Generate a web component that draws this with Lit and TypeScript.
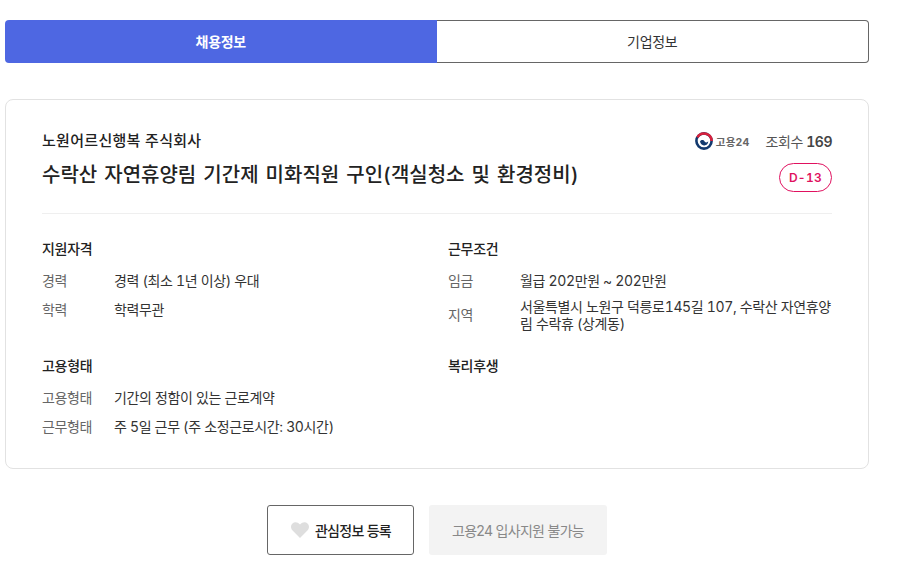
import { LitElement, html, css } from "lit";
import { customElement } from "lit/decorators.js";

@customElement("app-root")
export class AppRoot extends LitElement {
  static styles = css`
    :host {
      display: block;
      background: #fff;
      min-height: 586px;
      font-family: "Inter", "Noto Sans CJK KR", "Noto Sans", sans-serif;
      font-variant-numeric: tabular-nums;
      color: #222;
    }
    .page { width: 864px; padding: 20px 0 0 5px; }
    .tabs { display: flex; height: 43px; }
    .tab {
      flex: 1 1 0;
      display: flex; align-items: center; justify-content: center;
      font-size: 14px; letter-spacing: -0.3px; box-sizing: border-box; padding-bottom: 2px;
    }
    .tab.on { background: #4e67e2; color: #fff; font-weight: 700; border-radius: 4px 0 0 4px; }
    .tab.off { background: #fff; color: #333; border: 1px solid #666; border-left: 0; border-radius: 0 4px 4px 0; }
    .card {
      margin-top: 36px; height: 370px; box-sizing: border-box;
      border: 1px solid #e2e2e2; border-radius: 8px;
      padding: 30px 36px 0;
    }
    .head { display: flex; justify-content: space-between; height: 83px; border-bottom: 1px solid #efefef; }
    .company { font-size: 15px; font-weight: 500; line-height: 22px; letter-spacing: 0.3px; }
    .title { font-size: 20px; font-weight: 500; line-height: 30px; margin-top: 8px; word-spacing: 1.7px; }
    .side { display: flex; flex-direction: column; align-items: flex-end; }
    .meta { display: flex; align-items: center; height: 22px; }
    .logo { display: flex; align-items: center; gap: 3px; font-size: 10.5px; font-weight: 700; color: #666; margin-right: 16px; letter-spacing: 0.2px; }
    .views { font-size: 14px; color: #555; letter-spacing: -0.45px; }
    .views b { font-weight: 600; color: #444; }
    .dday {
      margin-top: 11px; width: 53px; height: 29px; box-sizing: border-box;
      border: 1px solid #e0115f; border-radius: 15px; color: #e0115f;
      font-size: 12px; font-weight: 600; letter-spacing: 0.3px;
      display: flex; align-items: center; justify-content: center;
    }
    .grid { display: grid; grid-template-columns: 406px 384px; grid-template-rows: 117px auto; margin-top: 25px; }
    h3 { margin: 0 0 7px; font-size: 14px; font-weight: 500; line-height: 20px; letter-spacing: -0.3px; color: #222; }
    .row { display: grid; grid-template-columns: 72px 1fr; align-items: center; font-size: 14px; line-height: 18px; min-height: 29px; color: #333; letter-spacing: -0.35px; }
    .row span:first-child { color: #666; }
    .row.multi { padding: 2.5px 0; }
    .row.multi span:last-child { line-height: 17px; }
    .actions { display: flex; justify-content: center; gap: 15px; margin-top: 36px; }
    .btn {
      height: 50px; box-sizing: border-box; border-radius: 3px;
      display: flex; align-items: center; justify-content: center;
      font-size: 14px; font-family: inherit; letter-spacing: -0.7px;
    }
    .fav { width: 147px; background: #fff; border: 1px solid #666; font-weight: 500; color: #222; gap: 6px; padding: 0 0 0 1px; }
    .apply { width: 178px; background: #f3f3f3; border: 0; color: #888; }
  `;

  render() {
    return html`
      <div class="page">
        <div class="tabs">
          <div class="tab on">채용정보</div>
          <div class="tab off">기업정보</div>
        </div>
        <div class="card">
          <div class="head">
            <div>
              <div class="company">노원어르신행복 주식회사</div>
              <div class="title">수락산 자연휴양림 기간제 미화직원 구인(객실청소 및 환경정비)</div>
            </div>
            <div class="side">
              <div class="meta">
                <div class="logo">
                  <svg width="18" height="18" viewBox="0 0 18 18" fill="none">
                    <circle cx="9" cy="9" r="7.6" stroke="#12396e" stroke-width="2.6"></circle>
                    <path d="M2.4 5.4 A7.6 7.6 0 0 1 16.6 9" stroke="#d8203c" stroke-width="2.6"></path>
                    <path d="M5 9.4 C6.4 7.4 8.6 7.8 9.6 9.4 C10.6 10.9 12.6 10.8 13.1 9 C13.5 11.6 11.3 13.6 9 13.4 C7 13.2 5.4 11.6 5 9.4 Z" fill="#12396e"></path>
                  </svg>
                  <span>고용24</span>
                </div>
                <div class="views">조회수 <b>169</b></div>
              </div>
              <div class="dday">D-13</div>
            </div>
          </div>
          <div class="grid">
            <section>
              <h3>지원자격</h3>
              <div class="row"><span>경력</span><span>경력 (최소 1년 이상) 우대</span></div>
              <div class="row"><span>학력</span><span>학력무관</span></div>
            </section>
            <section>
              <h3>근무조건</h3>
              <div class="row"><span>임금</span><span>월급 202만원 ~ 202만원</span></div>
              <div class="row multi"><span>지역</span><span>서울특별시 노원구 덕릉로145길 107, 수락산 자연휴양림 수락휴 (상계동)</span></div>
            </section>
            <section>
              <h3>고용형태</h3>
              <div class="row"><span>고용형태</span><span>기간의 정함이 있는 근로계약</span></div>
              <div class="row"><span>근무형태</span><span>주 5일 근무 (주 소정근로시간: 30시간)</span></div>
            </section>
            <section>
              <h3>복리후생</h3>
            </section>
          </div>
        </div>
        <div class="actions">
          <button class="btn fav">
            <svg width="18" height="16" viewBox="0 0 18 16"><path d="M9 16 L1.6 8.6 C-0.5 6.5 -0.5 3.2 1.5 1.4 C3.5 -0.4 6.6 -0.2 9 2.6 C11.4 -0.2 14.5 -0.4 16.5 1.4 C18.5 3.2 18.5 6.5 16.4 8.6 Z" fill="#dedede"></path></svg>
            <span>관심정보 등록</span>
          </button>
          <button class="btn apply">고용24 입사지원 불가능</button>
        </div>
      </div>
    `;
  }
}
